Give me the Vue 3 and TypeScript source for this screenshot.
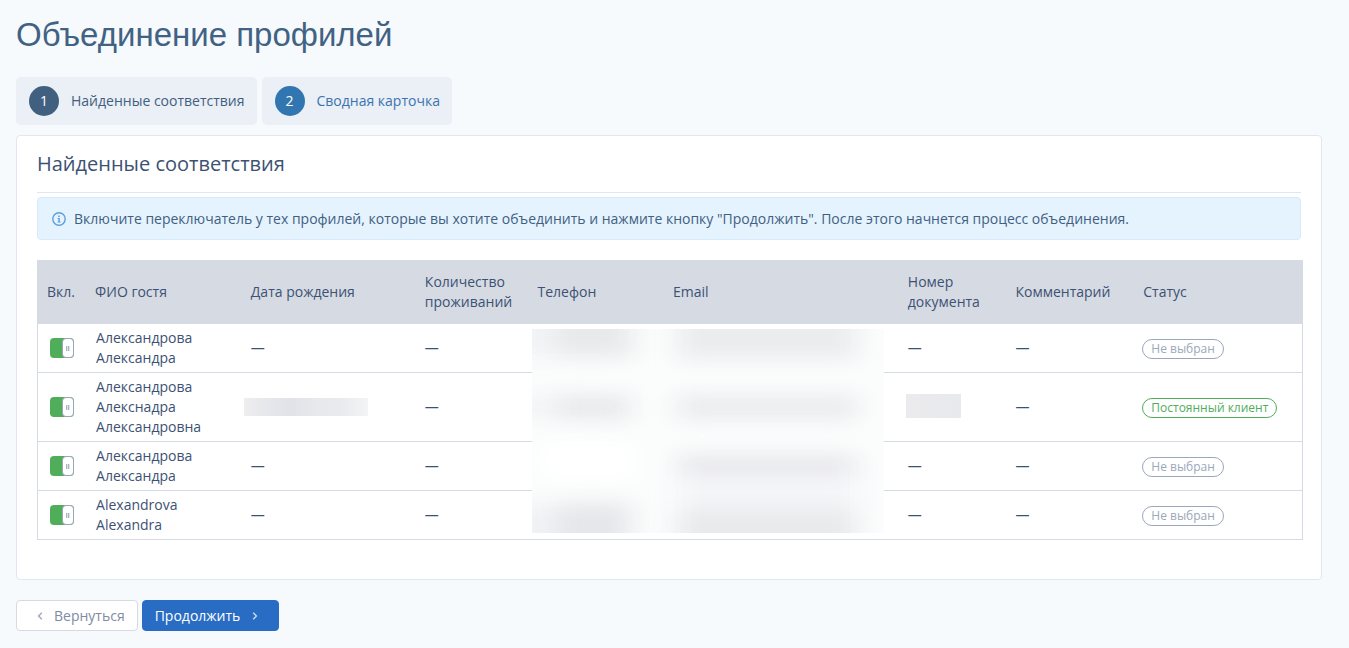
<script setup lang="ts">
import { ref } from 'vue'

interface Step {
  id: number
  title: string
  active: boolean
}

interface Profile {
  id: number
  enabled: boolean
  name: string[]
  birthHidden: boolean
  documentHidden: boolean
  status: string
  regular: boolean
}

const steps: Step[] = [
  { id: 1, title: 'Найденные соответствия', active: true },
  { id: 2, title: 'Сводная карточка', active: false },
]

const profiles = ref<Profile[]>([
  { id: 1, enabled: true, name: ['Александрова', 'Александра'], birthHidden: false, documentHidden: false, status: 'Не выбран', regular: false },
  { id: 2, enabled: true, name: ['Александрова', 'Алекснадра', 'Александровна'], birthHidden: true, documentHidden: true, status: 'Постоянный клиент', regular: true },
  { id: 3, enabled: true, name: ['Александрова', 'Александра'], birthHidden: false, documentHidden: false, status: 'Не выбран', regular: false },
  { id: 4, enabled: true, name: ['Alexandrova', 'Alexandra'], birthHidden: false, documentHidden: false, status: 'Не выбран', regular: false },
])
</script>

<template>
  <main class="page">
    <h1 class="title">Объединение профилей</h1>

    <nav class="steps">
      <a v-for="step in steps" :key="step.id" href="#" class="step" :class="{ active: step.active }">
        <span class="step-number">{{ step.id }}</span>
        <span>{{ step.title }}</span>
      </a>
    </nav>

    <section class="card">
      <h2 class="card-title">Найденные соответствия</h2>

      <div class="notice">
        <svg class="notice-icon" viewBox="0 0 14 14" aria-hidden="true">
          <circle cx="7" cy="7" r="6.2" fill="none" stroke="#5b9fe0" stroke-width="1.4" />
          <path d="M6.2 3.4h1.6v1.5H6.2zM5.6 6h2.2v3.4h.7v1H5.6v-1h.7V7h-.7z" fill="#5b9fe0" />
        </svg>
        <span>Включите переключатель у тех профилей, которые вы хотите объединить и нажмите кнопку "Продолжить". После этого начнется процесс объединения.</span>
      </div>

      <div class="table-wrap">
        <table class="table">
          <colgroup>
            <col class="c-toggle" />
            <col class="c-name" />
            <col class="c-birth" />
            <col class="c-stays" />
            <col class="c-phone" />
            <col class="c-email" />
            <col class="c-doc" />
            <col class="c-comment" />
            <col />
          </colgroup>
          <thead>
            <tr>
              <th>Вкл.</th>
              <th>ФИО гостя</th>
              <th>Дата рождения</th>
              <th>Количество проживаний</th>
              <th>Телефон</th>
              <th>Email</th>
              <th>Номер документа</th>
              <th>Комментарий</th>
              <th>Статус</th>
            </tr>
          </thead>
          <tbody>
            <tr v-for="profile in profiles" :key="profile.id">
              <td class="toggle-cell">
                <input v-model="profile.enabled" type="checkbox" class="toggle" :aria-label="profile.name.join(' ')" />
              </td>
              <td class="name-cell">
                <div v-for="part in profile.name" :key="part">{{ part }}</div>
              </td>
              <td>
                <div v-if="profile.birthHidden" class="smear smear-birth"></div>
                <template v-else>—</template>
              </td>
              <td>—</td>
              <td></td>
              <td></td>
              <td>
                <div v-if="profile.documentHidden" class="smear smear-doc"></div>
                <template v-else>—</template>
              </td>
              <td>—</td>
              <td class="status-cell">
                <span class="pill" :class="{ regular: profile.regular }">{{ profile.status }}</span>
              </td>
            </tr>
          </tbody>
        </table>

        <svg class="veil" viewBox="0 0 352 204" preserveAspectRatio="none" aria-hidden="true">
          <defs>
            <filter id="soft" x="-30%" y="-100%" width="160%" height="300%" color-interpolation-filters="sRGB">
              <feGaussianBlur stdDeviation="13 9" />
            </filter>
          </defs>
          <rect width="352" height="204" fill="#fbfcfc" />
          <g filter="url(#soft)">
            <rect x="-40" y="-30" width="70" height="58" fill="#f2f3f6" />
            <rect x="24" y="-30" width="76" height="58" fill="#e8e9eb" />
            <rect x="-40" y="68" width="70" height="20" fill="#f3f4f6" />
            <rect x="24" y="66" width="74" height="24" fill="#e9e9ec" />
            <rect x="5" y="112" width="100" height="40" fill="#ffffff" />
            <rect x="-40" y="176" width="70" height="60" fill="#f0f2f5" />
            <rect x="24" y="174" width="74" height="60" fill="#e6e7eb" />
            <rect x="146" y="-30" width="178" height="60" fill="#ebecee" />
            <rect x="146" y="66" width="178" height="24" fill="#eaebee" />
            <rect x="146" y="124" width="178" height="60" fill="#f4f5f8" />
            <rect x="146" y="127" width="178" height="18" fill="#e8e8ec" />
            <rect x="146" y="180" width="178" height="60" fill="#e9eaec" />
          </g>
        </svg>
      </div>
    </section>

    <div class="actions">
      <button type="button" class="btn btn-back">
        <svg class="chevron" viewBox="0 0 6 8" aria-hidden="true">
          <path d="M4.8 .8L1.6 4l3.2 3.2" fill="none" stroke="currentColor" stroke-width="1.4" />
        </svg>
        <span>Вернуться</span>
      </button>
      <button type="button" class="btn btn-next">
        <span>Продолжить</span>
        <svg class="chevron" viewBox="0 0 6 8" aria-hidden="true">
          <path d="M1.2 .8L4.4 4 1.2 7.2" fill="none" stroke="currentColor" stroke-width="1.4" />
        </svg>
      </button>
    </div>
  </main>
</template>

<style>
body {
  background: #f6fafd;
}
</style>

<style scoped>
.page {
  padding: 10px 27px 16px 16px;
  font: 14px/20px "Open Sans", "Noto Sans", sans-serif;
  color: #3c5173;
}

.title {
  margin: 0 0 17px;
  font: 400 33px/50px "Liberation Sans", Arial, sans-serif;
  color: #416283;
}

.steps {
  display: flex;
  gap: 5px;
  margin-bottom: 10px;
}

.step {
  display: flex;
  align-items: center;
  gap: 12px;
  height: 48px;
  padding: 0 12px 0 13px;
  border-radius: 5px;
  background: #ebeff6;
  color: #3a74b0;
  text-decoration: none;
}

.step-number {
  width: 30px;
  border-radius: 50%;
  background: #3276b1;
  color: #fff;
  line-height: 30px;
  text-align: center;
}

.step.active {
  color: #416080;
}

.step.active .step-number {
  background: #416080;
}

.card {
  padding: 0 20px 39px;
  border: 1px solid #e0e7f1;
  border-radius: 4px;
  background: #fff;
}

.card-title {
  margin: 0 0 4px;
  border-bottom: 1px solid #e0e5ee;
  font-size: 20px;
  font-weight: 400;
  line-height: 56px;
}

.notice {
  display: flex;
  align-items: center;
  gap: 8px;
  min-height: 41px;
  padding: 0 14px;
  border: 1px solid #d5eafd;
  border-radius: 4px;
  background: #e5f3ff;
  color: #416080;
}

.notice-icon {
  flex: none;
  width: 14px;
  height: 14px;
}

.table-wrap {
  position: relative;
  width: calc(100% + 2px);
  margin-top: 20px;
}

.table {
  width: 100%;
  table-layout: fixed;
  border-collapse: separate;
  border-spacing: 0;
}

.c-toggle { width: 3.8%; }
.c-name { width: 12.3%; }
.c-birth { width: 13.75%; }
.c-stays { width: 8.9%; }
.c-phone { width: 10.7%; }
.c-email { width: 18.55%; }
.c-doc { width: 8.5%; }
.c-comment { width: 10.1%; }

th {
  height: 64px;
  padding: 0 10px;
  background: #d6dbe3;
  font-weight: 400;
  text-align: left;
}

td {
  padding: 4px 10px;
  border-bottom: 1px solid #d6dae2;
}

td:first-child {
  border-left: 1px solid #d6dae2;
}

td:last-child {
  border-right: 1px solid #d6dae2;
}

.name-cell {
  padding-left: 11px;
}

.toggle-cell {
  padding: 4px 12px;
}

.status-cell {
  padding-left: 9px;
}

.toggle {
  display: flex;
  justify-content: flex-end;
  appearance: none;
  width: 24px;
  height: 20px;
  margin: 0;
  border-radius: 4px;
  background: #50ad5a;
}

.toggle:not(:checked) {
  justify-content: flex-start;
  background: #cbd1db;
}

.toggle::before {
  content: "";
  box-sizing: border-box;
  width: 12px;
  height: 20px;
  border: 1px solid #9aa5b8;
  border-radius: 4px;
  background:
    linear-gradient(90deg, #a9b3c4 1px, #dfe3ea 1px, #dfe3ea 2px, #a9b3c4 2px, #a9b3c4 3px, #dfe3ea 3px) center / 4px 5px no-repeat,
    #fff;
}

.smear-birth {
  width: 124px;
  height: 18px;
  margin-left: -7px;
  background: linear-gradient(90deg, #eeeeef, #e5e6ea 22%, #e2e3e8 38%, #e8e9ed 60%, #e9eaee 78%, #f3f4f5);
}

.smear-doc {
  width: 55px;
  height: 24px;
  margin: 0 0 2px -2px;
  background: linear-gradient(90deg, #ebebed, #e8e9ed);
}

.pill {
  display: inline-block;
  padding: 0 8px;
  border: 1px solid #9ba7ba;
  border-radius: 10px;
  color: #9ba7ba;
  font-size: 12px;
  line-height: 18px;
  vertical-align: middle;
  white-space: nowrap;
}

.pill.regular {
  border-color: #50ad5a;
  color: #50ad5a;
}

.veil {
  position: absolute;
  top: 69px;
  left: 39.1%;
  width: 27.8%;
  height: 204px;
}

.actions {
  display: flex;
  gap: 4px;
  margin-top: 20px;
}

.btn {
  display: flex;
  align-items: center;
  height: 31px;
  border: 1px solid #d6dbe3;
  border-radius: 4px;
  font: inherit;
}

.chevron {
  width: 6px;
  height: 8px;
}

.btn-back {
  gap: 11px;
  padding: 0 12px 0 20px;
  background: #fff;
  color: #7f8ba3;
}

.btn-next {
  gap: 12px;
  padding: 0 20px 0 12px;
  border-color: #286cc3;
  background: #286cc3;
  color: #fff;
}

.btn .chevron {
  opacity: 0.75;
}
</style>
